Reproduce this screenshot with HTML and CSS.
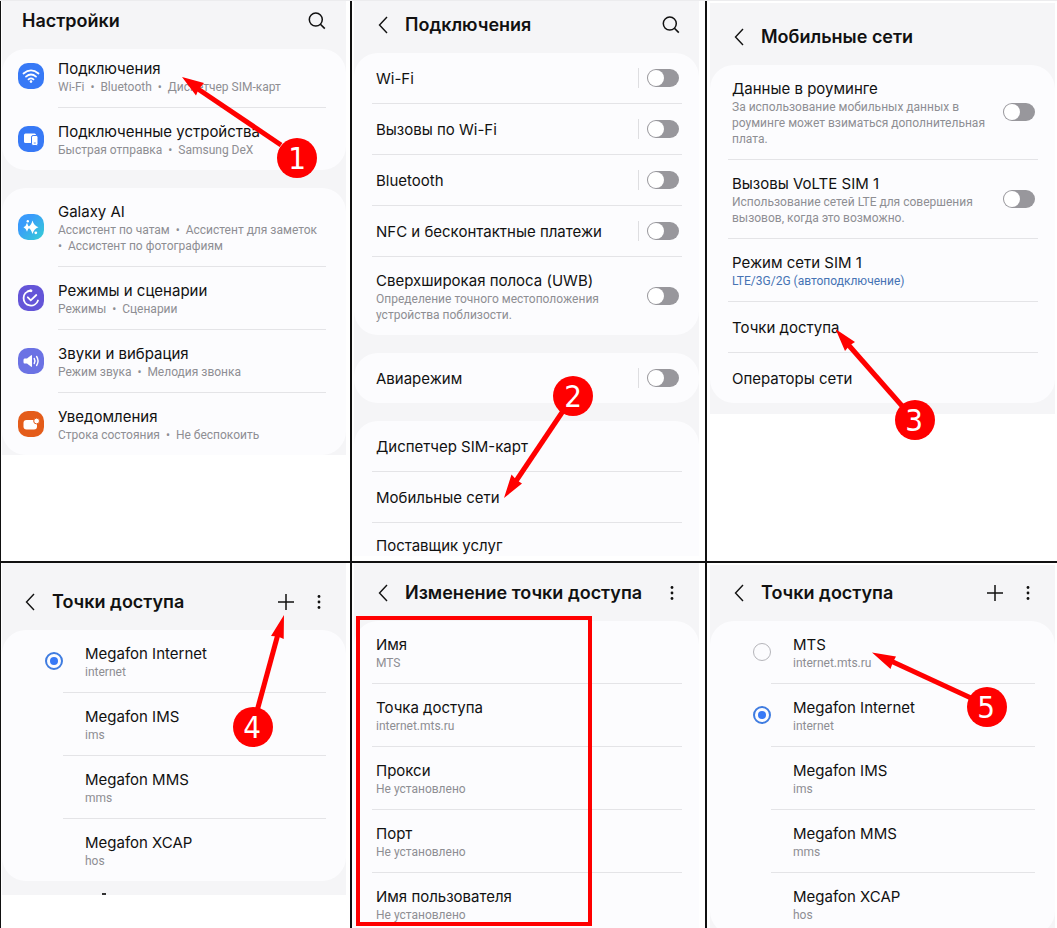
FILE: index.html
```html
<!DOCTYPE html>
<html lang="ru">
<head>
<meta charset="utf-8">
<meta name="viewport" content="width=device-width, initial-scale=1">
<title>Настройка точки доступа</title>
<link rel="stylesheet" href="styles.css">
</head>
<body>
<svg class="defs" aria-hidden="true">
  <symbol id="i-back" viewBox="0 0 10 18"><path d="M9 1 1.500 9 9 17" fill="none" stroke="#111" stroke-width="1.400"/></symbol>
  <symbol id="i-search" viewBox="0 0 18 18"><circle cx="7.800" cy="7.600" r="6.500" fill="none" stroke="#111" stroke-width="1.500"/><path d="M12.400 12.200 16.800 16.600" stroke="#111" stroke-width="1.600"/></symbol>
  <symbol id="i-plus" viewBox="0 0 18 18"><path d="M9 1v16M1 9h16" stroke="#111" stroke-width="1.500"/></symbol>
  <symbol id="i-dots" viewBox="0 0 4 16"><g fill="#111"><circle cx="2" cy="2.500" r="1.400"/><circle cx="2" cy="8" r="1.400"/><circle cx="2" cy="13.500" r="1.400"/></g></symbol>
</svg>
<main class="board">

  <section class="cell top left">
    <div class="sheet">
      <header class="bar bar-home">
        <h1>Настройки</h1>
        <button type="button" aria-label="Поиск"><svg width="18" height="18"><use href="#i-search"/></svg></button>
      </header>
      <div class="card card-raised">
        <a class="row row-icon" href="#">
          <svg class="badge" viewBox="0 0 26 26"><rect width="26" height="26" rx="10" fill="#3779f6"/><g fill="none" stroke="#fff" stroke-width="1.800" stroke-linecap="round"><path d="M5.500 10.500Q13 4.300 20.500 10.500M8 13.600Q13 9.500 18 13.600M10.500 16.400Q13 14.400 15.500 16.400"/></g><circle cx="13" cy="18.600" r="1.300" fill="#fff"/></svg>
          <span class="body"><span class="title">Подключения</span><span class="sub">Wi-Fi&nbsp; •&nbsp; Bluetooth&nbsp; •&nbsp; Диспетчер SIM-карт</span></span>
        </a>
        <a class="row row-icon" href="#">
          <svg class="badge" viewBox="0 0 26 26"><rect width="26" height="26" rx="10" fill="#3779f6"/><rect x="6" y="7.500" width="12" height="9.500" rx="1.500" fill="#fff"/><rect x="13.500" y="9.500" width="6.500" height="10" rx="1.600" fill="#fff" stroke="#3779f6"/><path d="M15.800 17h2" stroke="#3779f6" stroke-width=".8"/></svg>
          <span class="body"><span class="title">Подключенные устройства</span><span class="sub">Быстрая отправка&nbsp; •&nbsp; Samsung DeX</span></span>
        </a>
      </div>
      <div class="card">
        <a class="row row-icon" href="#">
          <svg class="badge" viewBox="0 0 26 26"><defs><linearGradient id="ai" x1="0" y1="0" x2="1" y2="1"><stop offset=".3" stop-color="#399bfb"/><stop offset="1" stop-color="#35cfd4"/></linearGradient></defs><rect width="26" height="26" rx="10" fill="url(#ai)"/><g fill="#fff"><path d="M14.500 6.500Q15.800 11.700 20.500 13.200 15.800 14.700 14.500 20 13.200 14.700 9.500 13.200 13.200 11.700 14.500 6.500Z"/><path d="M9 8.700Q9.900 12.200 12 13.200 9.900 14.200 9 17.700 8.100 14.200 5.500 13.200 8.100 12.200 9 8.700Z"/><circle cx="9.800" cy="7.200" r="1.200"/><circle cx="17.800" cy="18.800" r="1.400"/></g></svg>
          <span class="body"><span class="title">Galaxy AI</span><span class="sub">Ассистент по чатам&nbsp; •&nbsp; Ассистент для заметок<br>•&nbsp; Ассистент по фотографиям</span></span>
        </a>
        <a class="row row-icon" href="#">
          <svg class="badge" viewBox="0 0 26 26"><rect width="26" height="26" rx="10" fill="#6455d8"/><g fill="none" stroke="#fff" stroke-width="1.800" stroke-linecap="round"><path d="M12 5.800A7.400 7.400 0 1 0 20 15.500M9.500 6.300 12.500 5.300M9.800 12.300 12.800 15.300 18.300 10"/></g><circle cx="13" cy="5.800" r="1.400" fill="#fff"/></svg>
          <span class="body"><span class="title">Режимы и сценарии</span><span class="sub">Режимы&nbsp; •&nbsp; Сценарии</span></span>
        </a>
        <a class="row row-icon" href="#">
          <svg class="badge" viewBox="0 0 26 26"><rect width="26" height="26" rx="10" fill="#6b72e4"/><path d="M6.500 10.500H9L13.500 7Q14 7 14 8V18Q14 19 13.500 19L9 15.500H6.500Q5.500 15.500 5.500 14V12Q5.500 10.500 6.500 10.500Z" fill="#fff"/><path d="M16.200 10.500Q17.800 13 16.200 15.500M18.600 8.500Q21.500 13 18.600 17.500" fill="none" stroke="#fff" stroke-width="1.400" stroke-linecap="round"/></svg>
          <span class="body"><span class="title">Звуки и вибрация</span><span class="sub">Режим звука&nbsp; •&nbsp; Мелодия звонка</span></span>
        </a>
        <a class="row row-icon" href="#">
          <svg class="badge" viewBox="0 0 26 26"><rect width="26" height="26" rx="10" fill="#e45c1a"/><rect x="5.500" y="9" width="13.500" height="9.500" rx="3" fill="#fff"/><circle cx="18.600" cy="10" r="2.900" fill="#fff" stroke="#e45c1a"/></svg>
          <span class="body"><span class="title">Уведомления</span><span class="sub">Строка состояния&nbsp; •&nbsp; Не беспокоить</span></span>
        </a>
      </div>
    </div>
    <svg class="note" width="349" height="560" viewBox="1 1 349 560"><path class="shaft" d="M198 89 281 145"/><path d="M182 77 204 83 198.500 89.500 196 95.500Z"/><circle cx="297" cy="158" r="20"/><text x="297" y="169">1</text></svg>
  </section>

  <section class="cell top middle">
    <div class="sheet">
      <header class="bar bar-list">
        <button type="button" aria-label="Назад"><svg width="10" height="18"><use href="#i-back"/></svg></button>
        <h1>Подключения</h1>
        <button type="button" aria-label="Поиск"><svg width="18" height="18"><use href="#i-search"/></svg></button>
      </header>
      <div class="card">
        <label class="row"><span class="body"><span class="title">Wi-Fi</span></span><span class="split"></span><input type="checkbox" class="toggle"></label>
        <label class="row"><span class="body"><span class="title">Вызовы по Wi-Fi</span></span><span class="split"></span><input type="checkbox" class="toggle"></label>
        <label class="row"><span class="body"><span class="title">Bluetooth</span></span><span class="split"></span><input type="checkbox" class="toggle"></label>
        <label class="row"><span class="body"><span class="title">NFC и бесконтактные платежи</span></span><span class="split"></span><input type="checkbox" class="toggle"></label>
        <label class="row row-tall"><span class="body"><span class="title">Сверхширокая полоса (UWB)</span><span class="sub">Определение точного местоположения<br>устройства поблизости.</span></span><input type="checkbox" class="toggle"></label>
      </div>
      <div class="card">
        <label class="row"><span class="body"><span class="title">Авиарежим</span></span><span class="split"></span><input type="checkbox" class="toggle"></label>
      </div>
      <div class="card card-open">
        <a class="row" href="#"><span class="body"><span class="title">Диспетчер SIM-карт</span></span></a>
        <a class="row" href="#"><span class="body"><span class="title">Мобильные сети</span></span></a>
        <a class="row row-cut" href="#"><span class="body"><span class="title">Поставщик услуг</span></span></a>
      </div>
    </div>
    <svg class="note" width="353" height="560" viewBox="352 1 353 560"><path class="shaft" d="M516 481 563 411"/><path d="M504 498 511.500 474.500 516.500 480 522 483.500Z"/><circle cx="573" cy="396" r="20"/><text x="573" y="407">2</text></svg>
  </section>

  <section class="cell top right">
    <div class="sheet">
      <header class="bar bar-network">
        <button type="button" aria-label="Назад"><svg width="10" height="18"><use href="#i-back"/></svg></button>
        <h1>Мобильные сети</h1>
      </header>
      <div class="card card-end">
        <label class="row row-tall"><span class="body"><span class="title">Данные в роуминге</span><span class="sub">За использование мобильных данных в<br>роуминге может взиматься дополнительная<br>плата.</span></span><input type="checkbox" class="toggle"></label>
        <label class="row row-tall"><span class="body"><span class="title">Вызовы VoLTE SIM 1</span><span class="sub">Использование сетей LTE для совершения<br>вызовов, когда это возможно.</span></span><input type="checkbox" class="toggle"></label>
        <a class="row row-tall" href="#"><span class="body"><span class="title">Режим сети SIM 1</span><span class="sub sub-link">LTE/3G/2G (автоподключение)</span></span></a>
        <a class="row" href="#"><span class="body"><span class="title">Точки доступа</span></span></a>
        <a class="row" href="#"><span class="body"><span class="title">Операторы сети</span></span></a>
      </div>
    </div>
    <svg class="note" width="350" height="560" viewBox="707 1 350 560"><path class="shaft" d="M848.500 345 903 407"/><path d="M835.500 329 855 342 849.500 345.500 845 351Z"/><circle cx="915" cy="420" r="20"/><text x="914" y="431">3</text></svg>
  </section>

  <section class="cell left">
    <div class="sheet">
      <header class="bar bar-apn">
        <button type="button" aria-label="Назад"><svg width="10" height="18"><use href="#i-back"/></svg></button>
        <h1>Точки доступа</h1>
        <button type="button" aria-label="Добавить"><svg width="18" height="18"><use href="#i-plus"/></svg></button>
        <button type="button" aria-label="Ещё"><svg width="4" height="16"><use href="#i-dots"/></svg></button>
      </header>
      <div class="card">
        <label class="row row-radio"><span class="slot"><input type="radio" name="apn-before" checked></span><span class="body"><span class="title">Megafon Internet</span><span class="sub">internet</span></span></label>
        <div class="row row-radio"><span class="slot"></span><span class="body"><span class="title">Megafon IMS</span><span class="sub">ims</span></span></div>
        <div class="row row-radio"><span class="slot"></span><span class="body"><span class="title">Megafon MMS</span><span class="sub">mms</span></span></div>
        <div class="row row-radio"><span class="slot"></span><span class="body"><span class="title">Megafon XCAP</span><span class="sub">hos</span></span></div>
      </div>
      <div class="tail"><span class="speck"></span></div>
    </div>
    <svg class="note" width="349" height="365" viewBox="1 563 349 365"><path class="shaft" d="M278 634 257 711"/><path d="M284 615 283.700 639 278 636.500 271 636Z"/><circle cx="253" cy="727" r="20"/><text x="252" y="738">4</text></svg>
  </section>

  <section class="cell middle">
    <div class="sheet sheet-cut">
      <header class="bar bar-edit">
        <button type="button" aria-label="Назад"><svg width="10" height="18"><use href="#i-back"/></svg></button>
        <h1>Изменение точки доступа</h1>
        <button type="button" aria-label="Ещё"><svg width="4" height="16"><use href="#i-dots"/></svg></button>
      </header>
      <div class="card card-open">
        <a class="row row-tall" href="#"><span class="body"><span class="title">Имя</span><span class="sub">MTS</span></span></a>
        <a class="row row-tall" href="#"><span class="body"><span class="title">Точка доступа</span><span class="sub">internet.mts.ru</span></span></a>
        <a class="row row-tall" href="#"><span class="body"><span class="title">Прокси</span><span class="sub">Не установлено</span></span></a>
        <a class="row row-tall" href="#"><span class="body"><span class="title">Порт</span><span class="sub">Не установлено</span></span></a>
        <a class="row row-tall" href="#"><span class="body"><span class="title">Имя пользователя</span><span class="sub">Не установлено</span></span></a>
      </div>
    </div>
    <div class="frame"></div>
  </section>

  <section class="cell right">
    <div class="sheet sheet-cut">
      <header class="bar bar-edit">
        <button type="button" aria-label="Назад"><svg width="10" height="18"><use href="#i-back"/></svg></button>
        <h1>Точки доступа</h1>
        <button type="button" aria-label="Добавить"><svg width="18" height="18"><use href="#i-plus"/></svg></button>
        <button type="button" aria-label="Ещё"><svg width="4" height="16"><use href="#i-dots"/></svg></button>
      </header>
      <div class="card">
        <label class="row row-radio"><span class="slot"><input type="radio" name="apn-after"></span><span class="body"><span class="title">MTS</span><span class="sub">internet.mts.ru</span></span></label>
        <label class="row row-radio"><span class="slot"><input type="radio" name="apn-after" checked></span><span class="body"><span class="title">Megafon Internet</span><span class="sub">internet</span></span></label>
        <div class="row row-radio"><span class="slot"></span><span class="body"><span class="title">Megafon IMS</span><span class="sub">ims</span></span></div>
        <div class="row row-radio"><span class="slot"></span><span class="body"><span class="title">Megafon MMS</span><span class="sub">mms</span></span></div>
        <div class="row row-radio"><span class="slot"></span><span class="body"><span class="title">Megafon XCAP</span><span class="sub">hos</span></span></div>
      </div>
    </div>
    <svg class="note" width="350" height="365" viewBox="707 563 350 365"><path class="shaft" d="M892 661.500 971 698"/><path d="M872 652.500 896 656.500 893 662 890.500 669Z"/><circle cx="987" cy="707" r="20"/><text x="986" y="718">5</text></svg>
  </section>

</main>
</body>
</html>
```
FILE: styles.css
```css
* { box-sizing: border-box; }

body {
  margin: 0;
  background: #fff;
  color: #111;
  font-family: Inter, "Noto Sans", sans-serif;
}

a { color: inherit; text-decoration: none; }

button {
  display: flex;
  padding: 0;
  border: 0;
  background: none;
}

.defs { display: none; }

.board {
  display: grid;
  grid-template-columns: minmax(0, 350fr) minmax(0, 355fr) minmax(0, 352fr);
  border-top: 1px solid #ececee;
}

.cell {
  position: relative;
  overflow: hidden;
  border-left: 2px solid #111;
}
.cell.left { border-left-width: 1px; padding: 0 4px 0 1px; }
.cell.middle { padding: 0 6px 0 2px; }
.cell.right { padding: 2px 2px 0 3px; }
.cell.top { border-bottom: 2px solid #111; padding-bottom: 5px; }

.sheet {
  overflow: hidden;
  background: #f5f5f7;
}
.sheet-cut { margin-bottom: -7px; }

.bar {
  display: flex;
  align-items: center;
  gap: 17px;
  padding: 16px 25px 14px 24px;
}
.bar h1 {
  flex: 1;
  margin: 0;
  font-size: 18px;
  line-height: 28px;
  font-weight: 600;
  white-space: nowrap;
}
.bar-home { padding: 6px 20px 14px 20px; }
.bar-list { padding: 10px 19px 14px 24px; }
.bar-network { padding-top: 20px; }
.bar-apn { padding: 25px 25px 14px 23px; }
.bar button + button { margin-left: 5px; }
.right .bar-edit { padding-top: 14px; }

.card {
  display: flow-root;
  border-radius: 24px;
  background: #fcfcfe;
}
.card + .card { margin-top: 18px; }
.card-open { border-radius: 24px 24px 0 0; }
.card-end { margin-bottom: 11px; }

.row {
  display: flex;
  align-items: center;
  margin: 0 17px 0 18px;
  padding: 0 3px 0 4px;
}
.row + .row { border-top: 1px solid #e4e4e7; }

.body {
  flex: 1;
  min-width: 0;
  padding: 15px 0 14px;
}
.row-tall .body { padding: 13px 0 12px; }
.row-cut .body { padding: 12px 0 0; }

.title {
  display: block;
  font-size: 15px;
  line-height: 21px;
  white-space: nowrap;
}
.sub {
  display: block;
  color: #8e8e93;
  font-family: Roboto, Inter, sans-serif;
  font-size: 12px;
  line-height: 16px;
  white-space: nowrap;
}
.sub-link { color: #4673b4; }

.row-icon { gap: 14px; margin: 0 20px 0 16px; padding: 0; }
.row-icon .body, .row-radio .body { padding: 13px 0 12px; }
.row-icon + .row-icon, .row-radio + .row-radio { border-top: 0; }
.row-icon + .row-icon .body, .row-radio + .row-radio .body { border-top: 1px solid #e4e4e7; }
.card-raised .row:first-child { margin-top: -4px; }
.badge { width: 26px; height: 26px; flex: none; }

.row-radio { margin: 0 20px 0 0; padding: 0; }
.row-radio .body, .row-radio + .row-radio .body { padding-left: 22px; }
.slot {
  display: flex;
  justify-content: flex-end;
  width: 61px;
}
input[type="radio"] {
  appearance: none;
  width: 18px;
  height: 18px;
  margin: 0;
  border: 1px solid #b5b5ba;
  border-radius: 50%;
}
input[type="radio"]:checked {
  padding: 3px;
  border: 2px solid #3f7ce0;
  background: #3779f6 content-box;
}

.split {
  width: 1px;
  height: 20px;
  margin-right: 8px;
  background: #dedee1;
}
.toggle {
  appearance: none;
  display: flex;
  width: 32px;
  height: 18px;
  margin: 0;
  padding: 1px;
  border-radius: 9px;
  background: #98979c;
}
.toggle::before {
  content: "";
  width: 16px;
  height: 16px;
  border-radius: 50%;
  background: #fff;
}

.tail {
  display: flex;
  align-items: flex-end;
  height: 14px;
  padding-left: 100px;
}
.speck { width: 4px; height: 2px; background: #333; }

.note {
  position: absolute;
  top: 0;
  left: 0;
  fill: #f00;
  pointer-events: none;
}
.note .shaft { stroke: #f00; stroke-width: 5px; }
.note text {
  fill: #fff;
  font-family: "DejaVu Sans Condensed", "DejaVu Sans", sans-serif;
  font-size: 31px;
  text-anchor: middle;
}

.frame {
  position: absolute;
  top: 53px;
  left: 4px;
  width: 236px;
  height: 310px;
  border: 4px solid #f00;
}
```
